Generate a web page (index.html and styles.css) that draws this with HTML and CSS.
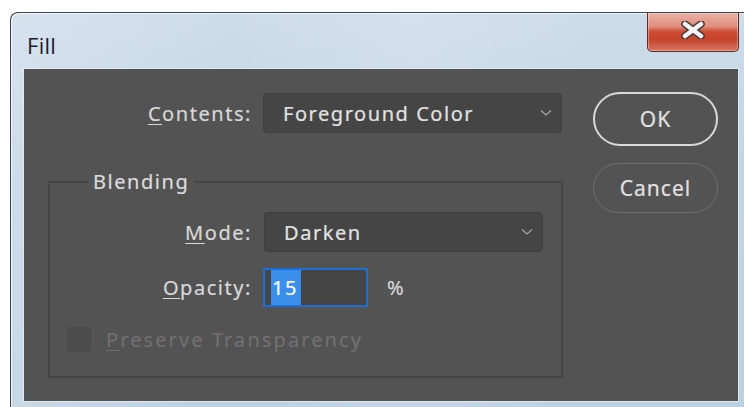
FILE: index.html
```html
<!DOCTYPE html>
<html lang="en">
<head>
<meta charset="utf-8">
<title>Fill</title>
<link rel="stylesheet" href="styles.css">
</head>
<body>
<div class="window">
  <div class="titlebar">
    <span class="title">Fill</span>
    <button class="close" aria-label="Close">
      <svg width="26" height="18" viewBox="0 0 26 18">
        <path class="x-out" d="M5 3 L21 15 M21 3 L5 15"/>
        <path class="x-in" d="M5 3 L21 15 M21 3 L5 15"/>
      </svg>
    </button>
  </div>
  <div class="client">
    <div class="main">
      <div class="row">
        <label class="label"><u>C</u>ontents:</label>
        <div class="select select-contents">
          <span>Foreground Color</span>
          <svg class="chev" width="12" height="8" viewBox="0 0 12 8"><path d="M1 1.5 L6 6 L11 1.5"/></svg>
        </div>
      </div>
      <fieldset class="group">
        <legend>Blending</legend>
        <div class="row">
          <label class="label label-inner"><u>M</u>ode:</label>
          <div class="select select-mode">
            <span>Darken</span>
            <svg class="chev" width="12" height="8" viewBox="0 0 12 8"><path d="M1 1.5 L6 6 L11 1.5"/></svg>
          </div>
        </div>
        <div class="row row-opacity">
          <label class="label label-inner"><u>O</u>pacity:</label>
          <div class="num-input"><span class="sel">15</span></div>
          <span class="unit">%</span>
        </div>
        <div class="check-row">
          <span class="checkbox"></span>
          <span class="check-text"><u>P</u>reserve Transparency</span>
        </div>
      </fieldset>
    </div>
    <div class="buttons">
      <button class="btn btn-ok">OK</button>
      <button class="btn btn-cancel">Cancel</button>
    </div>
  </div>
</div>
</body>
</html>
```

FILE: styles.css
```css
html, body {
  margin: 0;
  padding: 0;
  background: #ffffff;
  overflow: hidden;
}

body {
  width: 744px;
  height: 407px;
  font-family: "Noto Sans", "Open Sans", sans-serif;
}

/* Window frame */
.window {
  margin: 12px 0 0 10px;
  border-top: 1px solid #3b4148;
  border-left: 1px solid #3b4148;
  border-top-left-radius: 8px;
  padding: 0 5px 5px 12px;
  background:
    linear-gradient(90deg, rgba(255,255,255,0.18), rgba(255,255,255,0) 30%, rgba(255,255,255,0.12) 55%, rgba(255,255,255,0) 80%),
    linear-gradient(180deg, #cddceb 0%, #c3d5e5 40%, #bcd0e2 100%);
  box-shadow: inset 1px 1px 0 rgba(255,255,255,0.7);
}

.titlebar {
  height: 55px;
  display: flex;
  align-items: flex-start;
  justify-content: space-between;
}

.title {
  margin-top: 20px;
  margin-left: 4px;
  font-family: "Open Sans", "Noto Sans", sans-serif;
  font-size: 22px;
  line-height: 24px;
  color: #1e1c2a;
  letter-spacing: 0.3px;
}

.close {
  width: 92px;
  height: 39px;
  margin: 0;
  padding: 0;
  border: 1px solid #5e2a22;
  border-top: none;
  border-radius: 0 0 5px 5px;
  background: linear-gradient(180deg, #eab0a4 0%, #df8f7f 35%, #cc4a30 50%, #c5452c 70%, #d67562 100%);
  box-shadow: inset 0 0 0 1px rgba(255,255,255,0.35);
  display: flex;
  align-items: center;
  justify-content: center;
}

.close svg { display: block; margin-top: -4px; }
.x-out { stroke: #4a3a3a; stroke-width: 7.5; stroke-linecap: round; fill: none; }
.x-in { stroke: #f4f4f4; stroke-width: 4.5; stroke-linecap: round; fill: none; }

/* Dialog body */
.client {
  box-sizing: border-box;
  width: 716px;
  height: 334px;
  border: 1px solid #dfe9f2;
  background: #535353;
  display: flex;
  align-items: flex-start;
  gap: 30px;
  padding: 23px 0 0 24px;
  color: #d8d8d8;
  font-size: 20px;
  letter-spacing: 1.55px;
  -webkit-text-stroke: 0.2px currentColor;
}

.main {
  width: 515px;
  margin-top: 1px;
}

.row {
  display: flex;
  align-items: center;
}

.label {
  width: 204px;
  margin-right: 11px;
  text-align: right;
  flex: none;
}

.label-inner {
  width: 202px;
  margin-right: 12px;
}

u {
  text-decoration-thickness: 1px;
  text-underline-offset: 3px;
}

.select {
  box-sizing: border-box;
  height: 40px;
  border: 1px solid #3e3e3e;
  border-radius: 4px;
  background: #454545;
  display: flex;
  align-items: center;
  justify-content: space-between;
  padding: 0 9px 0 19px;
  color: #e2e2e2;
}

.select-contents { width: 299px; }
.select-mode { width: 279px; }

.chev path {
  fill: none;
  stroke: #a8a8a8;
  stroke-width: 1.2;
}

/* Blending group */
.group {
  box-sizing: border-box;
  width: 515px;
  margin: 36px 0 0 0;
  padding: 17px 0 24px 0;
  border: 2px solid #444444;
  min-width: 0;
}

.group legend {
  margin-left: 38px;
  padding: 0 5px;
  line-height: 26px;
  color: #dcdcdc;
}

.row-opacity {
  margin-top: 16px;
}

.row-opacity .label-inner {
  margin-right: 11px;
}

.num-input {
  box-sizing: border-box;
  width: 105px;
  height: 39px;
  border: 2px solid #1a6fd8;
  background: #454545;
  padding: 0 0 0 6px;
  display: flex;
  align-items: center;
}

.sel {
  background: #3b8eea;
  color: #ffffff;
  line-height: 35px;
  padding: 0 3px 0 1px;
  letter-spacing: 1.5px;
}

.unit {
  margin-left: 19px;
  color: #d8d8d8;
}

.check-row {
  margin-top: 20px;
  margin-left: 17px;
  display: flex;
  align-items: center;
  height: 25px;
}

.checkbox {
  box-sizing: border-box;
  width: 24px;
  height: 25px;
  border: 1px solid #4b4b4b;
  border-radius: 3px;
  background: #4c4c4c;
  margin-right: 15px;
  flex: none;
}

.check-text {
  color: #707070;
  letter-spacing: 2.1px;
}

/* Buttons */
.buttons {
  display: flex;
  flex-direction: column;
  gap: 17px;
  width: 125px;
}

.btn {
  box-sizing: border-box;
  width: 125px;
  margin: 0;
  padding: 0;
  font-family: "Noto Sans", "Open Sans", sans-serif;
  font-size: 21px;
  letter-spacing: 1px;
  -webkit-text-stroke: 0.2px currentColor;
  color: #e0e0e0;
  background: #535353;
  border-radius: 27px;
}

.btn-ok {
  height: 54px;
  border: 2px solid #d9d9d9;
}

.btn-cancel {
  height: 50px;
  border: 1px solid #6e6e6e;
  border-radius: 25px;
}
```
